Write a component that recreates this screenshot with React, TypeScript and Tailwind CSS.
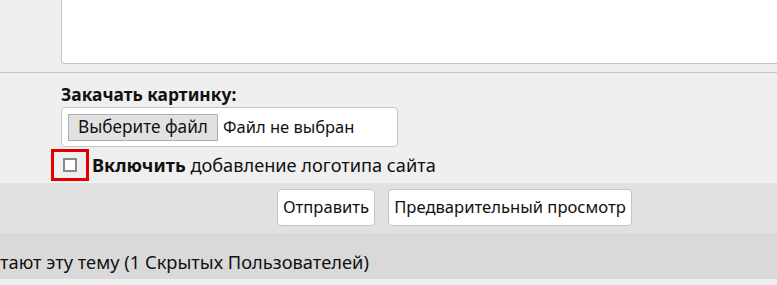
import React from "react";

export default function App() {
  const font = { fontFamily: '"Noto Sans", "Open Sans", sans-serif' };
  return (
    <div className="w-[777px] h-[285px] overflow-hidden bg-[#efefef] text-[#111]" style={font}>
      {/* textarea bottom */}
      <div className="ml-[61px] mr-[-10px] h-[64px] bg-white border border-t-0 border-[#c4c4c4] rounded-bl-[4px]" />
      <div className="mt-[8px] h-px bg-[#c4c4c4]" />
      <div className="pl-[61px] pt-[9px]">
        <div className="text-[17.4px] font-bold leading-[25px] h-[25px]">Закачать картинку:</div>
        <div className="w-[337px] h-[40px] bg-white border border-[#c4c4c4] rounded-[4px] flex items-center pl-[6px] gap-[5px]">
          <div className="h-[27px] w-[150px] bg-[#e1e1e1] border border-[#adadad] flex items-center justify-center text-[17.2px]">
            Выберите файл
          </div>
          <span className="text-[16.5px]">Файл не выбран</span>
        </div>
      </div>
      <div className="flex items-center h-[36px] pl-[51px]">
        <div className="w-[38px] h-[32px] border-[3px] border-[#e00000] flex items-center justify-center">
          <div className="w-[14px] h-[14px] bg-white border-2 border-[#8a8a8a]" />
        </div>
        <span className="ml-[3px] text-[18.2px] leading-[24px]">
          <b>Включить</b> добавление логотипа сайта
        </span>
      </div>
      <div className="bg-[#e1e1e1] h-[50px] flex gap-[13px] pt-[6px] pl-[277px]">
        <div className="h-[37px] w-[98px] bg-white border border-[#c4c4c4] rounded-[4px] flex items-center justify-center text-[16.6px]">
          Отправить
        </div>
        <div className="h-[37px] w-[244px] bg-white border border-[#c4c4c4] rounded-[4px] flex items-center justify-center text-[16.6px]">
          Предварительный просмотр
        </div>
      </div>
      <div className="bg-[#d9d9d9] h-[46px] flex items-center pt-[12px]">
        <span className="text-[18.3px] leading-[24px] whitespace-nowrap">тают эту тему (1 Скрытых Пользователей)</span>
      </div>
    </div>
  );
}
